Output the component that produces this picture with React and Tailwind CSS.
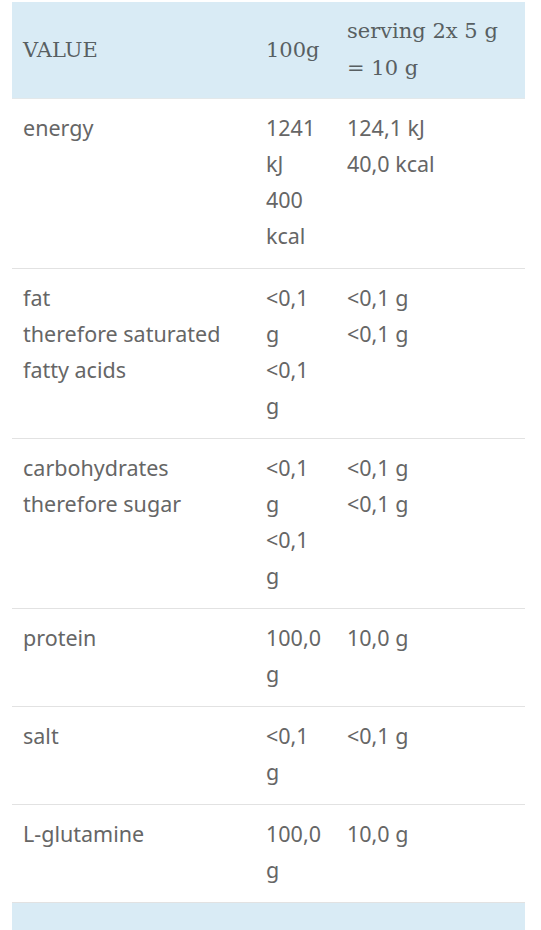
import React from 'react';

const rows = [
  { label: ['energy'], per100: ['1241', 'kJ', '400', 'kcal'], serving: ['124,1 kJ', '40,0 kcal'] },
  { label: ['fat', 'therefore saturated', 'fatty acids'], per100: ['<0,1', 'g', '<0,1', 'g'], serving: ['<0,1 g', '<0,1 g'] },
  { label: ['carbohydrates', 'therefore sugar'], per100: ['<0,1', 'g', '<0,1', 'g'], serving: ['<0,1 g', '<0,1 g'] },
  { label: ['protein'], per100: ['100,0', 'g'], serving: ['10,0 g'] },
  { label: ['salt'], per100: ['<0,1', 'g'], serving: ['<0,1 g'] },
  { label: ['L-glutamine'], per100: ['100,0', 'g'], serving: ['10,0 g'] },
];

const Lines = ({ lines }) => (
  <>
    {lines.map((l, i) => (
      <div key={i} className="whitespace-nowrap">{l}</div>
    ))}
  </>
);

export default function App() {
  return (
    <div className="min-h-screen bg-white pt-[2px]">
      <div className="ml-3 w-[513px] text-[#666666]">
        {/* Header */}
        <div
          className="grid grid-cols-[243px_81px_1fr] bg-[#d9ebf5] border-b border-[#e3e8ea] text-[21px] leading-[37px] py-[11px] text-[#585f62]"
          style={{ fontFamily: '"DejaVu Serif", serif' }}
        >
          <div className="px-[11px] flex items-center">VALUE</div>
          <div className="px-[11px] flex items-center">100g</div>
          <div className="px-[11px]">
            <div>serving 2x 5 g</div>
            <div>= 10 g</div>
          </div>
        </div>

        {/* Body */}
        {rows.map((r, i) => (
          <div
            key={i}
            className="grid grid-cols-[243px_81px_1fr] border-b border-[#e2e2e2] text-[21.5px] leading-[36px] pt-[11px] pb-[14px]"
            style={{ fontFamily: '"Noto Sans", sans-serif' }}
          >
            <div className="px-[11px]"><Lines lines={r.label} /></div>
            <div className="px-[11px]"><Lines lines={r.per100} /></div>
            <div className="px-[11px]"><Lines lines={r.serving} /></div>
          </div>
        ))}

        {/* Footer */}
        <div className="h-10 bg-[#d9ebf5]" />
      </div>
    </div>
  );
}
